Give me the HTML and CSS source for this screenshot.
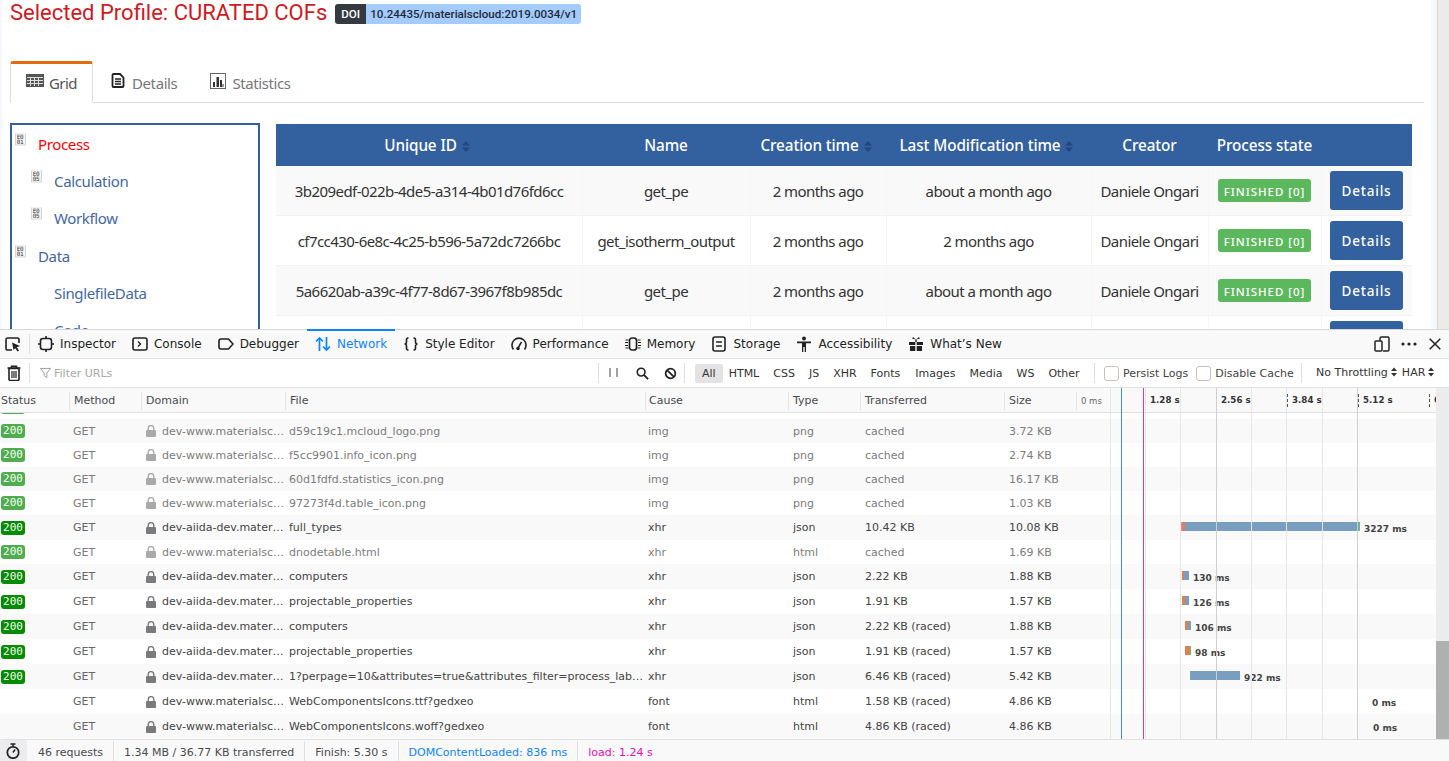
FILE: index.html
```html
<!DOCTYPE html>
<html lang="en">
<head>
<meta charset="utf-8">
<title>Selected Profile: CURATED COFs</title>
<link rel="stylesheet" href="styles.css">
</head>
<body>
<svg class="defs" width="0" height="0" aria-hidden="true">
  <defs>
    <symbol id="chip-a" viewBox="0 0 12 13">
      <rect width="12" height="13" fill="#d4d4d4"/><rect x="1" y="0" width="10" height="12" fill="#f4f4f4"/>
      <text x="2" y="5.500" class="chip-text">E0</text><text x="2" y="11.500" class="chip-text">01</text>
    </symbol>
    <symbol id="chip-b" viewBox="0 0 12 13">
      <rect width="12" height="13" fill="#d4d4d4"/><rect x="1" y="0" width="10" height="12" fill="#f4f4f4"/>
      <text x="2" y="5.500" class="chip-text">E0</text><text x="2" y="11.500" class="chip-text">05</text>
    </symbol>
    <symbol id="sort" viewBox="0 0 8 11"><path d="M0 4.5 4 0l4 4.5zM0 6.500h8L4 11z" fill="#23467e"/></symbol>
    <symbol id="lock" viewBox="0 0 10 12"><path d="M2.200 5V3.400a2.800 2.800 0 0 1 5.600 0V5" fill="none" stroke="currentColor" stroke-width="1.400"/><rect x="0" y="5" width="10" height="7" rx="1" fill="currentColor"/></symbol>
    <symbol id="updown" viewBox="0 0 6 10"><path d="M0 4 3 0.500 6 4zM0 6h6L3 9.500z" fill="#333"/></symbol>
  </defs>
</svg>

<div class="page-frame">
  <main class="page">
    <div class="title-row">
      <h1 class="title">Selected Profile: CURATED COFs</h1>
      <span class="doi"><span class="doi-key">DOI</span><span class="doi-val">10.24435/materialscloud:2019.0034/v1</span></span>
    </div>
    <nav class="page-tabs">
      <a class="page-tab active">
        <svg class="pt-icon grid-icon" viewBox="0 0 18 13"><rect width="18" height="13" fill="#555"/><path d="M1 3.500h16M1 6.500h16M1 9.500h16M4.500 3v9M8.500 3v9M12.500 3v9" stroke="#ddd" stroke-width="1"/></svg>
        Grid
      </a>
      <a class="page-tab">
        <svg class="pt-icon doc-icon" viewBox="0 0 14 16"><path d="M1.500 2.500a1 1 0 0 1 1-1H9l3.500 3.500v8.500a1 1 0 0 1-1 1h-9a1 1 0 0 1-1-1z" fill="#fff" stroke="#222" stroke-width="1.800"/><path d="M4 6.500h6M4 9h6M4 11.500h6" stroke="#222" stroke-width="1.300"/></svg>
        Details
      </a>
      <a class="page-tab">
        <svg class="pt-icon stat-icon" viewBox="0 0 16 16"><rect x="0.500" y="0.500" width="15" height="15" fill="#fff" stroke="#666"/><path d="M3 14V9h2v5zM6.500 14V4h2.500v10zM10 14V7h2v7z" fill="#333"/><path d="M12.500 14v-3h1v3z" fill="#333"/></svg>
        Statistics
      </a>
    </nav>
    <div class="content">
      <aside class="tree">
        <div class="tree-item lvl0 current"><svg class="chip"><use href="#chip-a"/></svg><span>Process</span></div>
        <div class="tree-item lvl1"><svg class="chip"><use href="#chip-b"/></svg><span>Calculation</span></div>
        <div class="tree-item lvl1"><svg class="chip"><use href="#chip-b"/></svg><span>Workflow</span></div>
        <div class="tree-item lvl0 data"><svg class="chip"><use href="#chip-a"/></svg><span>Data</span></div>
        <div class="tree-item lvl2"><span>SinglefileData</span></div>
        <div class="tree-item lvl2"><span>Code</span></div>
      </aside>
      <table class="nodes">
        <colgroup>
          <col class="w-id"><col class="w-name"><col class="w-ctime"><col class="w-mtime"><col class="w-creator"><col class="w-state"><col class="w-action">
        </colgroup>
        <thead>
          <tr>
            <th class="sortable">Unique ID <svg class="sort"><use href="#sort"/></svg></th>
            <th>Name</th>
            <th class="sortable">Creation time <svg class="sort"><use href="#sort"/></svg></th>
            <th class="sortable">Last Modification time <svg class="sort"><use href="#sort"/></svg></th>
            <th>Creator</th>
            <th>Process state</th>
            <th></th>
          </tr>
        </thead>
        <tbody>
          <tr><td>3b209edf-022b-4de5-a314-4b01d76fd6cc</td><td>get_pe</td><td>2 months ago</td><td>about a month ago</td><td>Daniele Ongari</td><td><span class="state">FINISHED [0]</span></td><td><button class="details">Details</button></td></tr>
          <tr><td>cf7cc430-6e8c-4c25-b596-5a72dc7266bc</td><td>get_isotherm_output</td><td>2 months ago</td><td>2 months ago</td><td>Daniele Ongari</td><td><span class="state">FINISHED [0]</span></td><td><button class="details">Details</button></td></tr>
          <tr><td>5a6620ab-a39c-4f77-8d67-3967f8b985dc</td><td>get_pe</td><td>2 months ago</td><td>about a month ago</td><td>Daniele Ongari</td><td><span class="state">FINISHED [0]</span></td><td><button class="details">Details</button></td></tr>
          <tr><td></td><td></td><td></td><td></td><td></td><td></td><td><button class="details">Details</button></td></tr>
        </tbody>
      </table>
    </div>
  </main>
  <div class="page-scroll"></div>
</div>

<section class="devtools">
  <div class="dt-tabs">
    <span class="picker">
      <svg class="ico" viewBox="0 0 16 16"><path d="M7 14H2.500A1.500 1.500 0 0 1 1 12.500v-9A1.500 1.500 0 0 1 2.500 2h10A1.500 1.500 0 0 1 14 3.500V7" fill="none" stroke="#222" stroke-width="1.600"/><path d="M7 6.500l8 3.500-3.200 1.300 2.200 3.200-1.500 1-2.200-3.200L8.500 14z" fill="#222"/></svg>
    </span>
    <a class="dt-tab"><svg class="ico" viewBox="0 0 16 16"><rect x="2.500" y="2.500" width="11" height="11" rx="2.500" fill="none" stroke="#222" stroke-width="1.600"/><path d="M8 0v2.500M8 13.500V16M0 8h2.500M13.500 8H16" stroke="#222" stroke-width="1.600"/></svg>Inspector</a>
    <a class="dt-tab"><svg class="ico" viewBox="0 0 16 16"><rect x="1" y="2" width="14" height="12" rx="2" fill="none" stroke="#222" stroke-width="1.600"/><path d="M6 5.500 8.500 8 6 10.500" fill="none" stroke="#222" stroke-width="1.400"/></svg>Console</a>
    <a class="dt-tab"><svg class="ico" viewBox="0 0 16 16"><path d="M3 3h7.500L15 8l-4.500 5H3a2 2 0 0 1-2-2V5a2 2 0 0 1 2-2z" fill="none" stroke="#222" stroke-width="1.600"/></svg>Debugger</a>
    <a class="dt-tab selected"><svg class="ico" viewBox="0 0 16 16"><path d="M4.500 15V2M1 5.500 4.500 2 8 5.500M11.500 1v13M8 10.500l3.500 3.500 3.500-3.500" fill="none" stroke="#0a84ff" stroke-width="1.700"/></svg>Network</a>
    <a class="dt-tab"><svg class="ico" viewBox="0 0 16 16"><path d="M5.500 2H5C3.500 2 3.500 3 3.500 4v2C3.500 7.200 2.500 8 1.500 8c1 0 2 .8 2 2v2c0 1 0 2 1.500 2h.5M10.500 2h.5c1.500 0 1.500 1 1.500 2v2c0 1.200 1 2 2 2-1 0-2 .8-2 2v2c0 1 0 2-1.500 2h-.5" fill="none" stroke="#222" stroke-width="1.600"/></svg>Style Editor</a>
    <a class="dt-tab"><svg class="ico" viewBox="0 0 16 16"><path d="M2.500 13.500A7 7 0 1 1 13.500 13.500" fill="none" stroke="#222" stroke-width="1.600"/><path d="M7 12 10.500 6" stroke="#222" stroke-width="1.500"/><circle cx="7" cy="12.500" r="1.800" fill="#222"/></svg>Performance</a>
    <a class="dt-tab"><svg class="ico" viewBox="0 0 16 16"><rect x="4.500" y="2" width="7" height="12" rx="2.500" fill="none" stroke="#222" stroke-width="1.700"/><path d="M0.500 4h3M0 6.500h3M0 9.500h3M0.500 12h3M12.500 4h3M13 6.500h3M13 9.500h3M12.500 12h3" stroke="#222" stroke-width="1"/></svg>Memory</a>
    <a class="dt-tab"><svg class="ico" viewBox="0 0 16 16"><rect x="2" y="1" width="12" height="14" rx="2" fill="none" stroke="#222" stroke-width="1.600"/><path d="M5 6h6M5 10h6" stroke="#222" stroke-width="1.500"/></svg>Storage</a>
    <a class="dt-tab"><svg class="ico" viewBox="0 0 16 16"><circle cx="8" cy="2.500" r="2" fill="#222"/><path d="M1 5.500h14v1.800h-5V16H8.700v-5H7.300v5H6V7.300H1z" fill="#222"/></svg>Accessibility</a>
    <a class="dt-tab"><svg class="ico" viewBox="0 0 16 16"><path d="M1 6h6.300V3.500h1.400V6H15v3H8.700V6H7.300v3H1zM2 10h5.300v5H2zM8.700 10H14v5H8.700z" fill="#222"/><path d="M8 3.500 5 1l-.8 1.800zM8 3.500 11 1l.8 1.800z" fill="#222"/></svg>What’s New</a>
    <span class="dt-tab-actions">
      <svg class="ico" viewBox="0 0 16 16"><path d="M6 4.500V2.500A1.500 1.500 0 0 1 7.500 1H14a1.500 1.500 0 0 1 1 1.500v11A1.500 1.500 0 0 1 13.500 15H9" fill="none" stroke="#222" stroke-width="1.500"/><rect x="1" y="5" width="7" height="10" rx="1" fill="none" stroke="#222" stroke-width="1.500"/></svg>
      <svg class="ico" viewBox="0 0 16 16"><circle cx="2" cy="8" r="1.600" fill="#222"/><circle cx="8" cy="8" r="1.600" fill="#222"/><circle cx="14" cy="8" r="1.600" fill="#222"/></svg>
      <svg class="ico ico-x" viewBox="0 0 12 12"><path d="M.7.700l10.600 10.600M11.300.7.700 11.300" stroke="#222" stroke-width="1.500"/></svg>
    </span>
  </div>

  <div class="dt-toolbar">
    <span class="trash"><svg class="ico" viewBox="0 0 16 16"><path d="M1.500 3h13M5.500 3V1.200h5V3" fill="none" stroke="#222" stroke-width="1.500"/><path d="M3 3.500h10V14a1.500 1.500 0 0 1-1.500 1.500h-7A1.500 1.500 0 0 1 3 14z" fill="none" stroke="#222" stroke-width="1.600"/><path d="M6 6v7M8 6v7M10 6v7" stroke="#222" stroke-width="1.200"/></svg></span>
    <span class="filter">
      <svg class="filter-ico" viewBox="0 0 12 12"><path d="M.5 1h11L7.500 6v5l-3-2V6z" fill="#fff" stroke="#999"/></svg>
      <span class="filter-ph">Filter URLs</span>
    </span>
    <span class="ctl-icons">
      <svg class="ctl pause" viewBox="0 0 10 12"><path d="M1 1v9M8 1v9" stroke="#444" stroke-width="1"/></svg>
      <svg class="ctl" viewBox="0 0 14 14"><circle cx="5.500" cy="5.500" r="4.200" fill="none" stroke="#222" stroke-width="1.700"/><path d="M8.500 8.500 13 13" stroke="#222" stroke-width="2"/></svg>
      <svg class="ctl" viewBox="0 0 14 14"><circle cx="7" cy="7" r="5.200" fill="none" stroke="#222" stroke-width="1.900"/><path d="M3.300 3.300l7.400 7.400" stroke="#222" stroke-width="1.900"/></svg>
    </span>
    <span class="types">
      <span class="type on">All</span><span class="type">HTML</span><span class="type">CSS</span><span class="type">JS</span><span class="type">XHR</span><span class="type type-fonts">Fonts</span><span class="type">Images</span><span class="type">Media</span><span class="type">WS</span><span class="type">Other</span>
    </span>
    <span class="checks">
      <label class="check"><span class="box"></span>Persist Logs</label>
      <label class="check"><span class="box"></span>Disable Cache</label>
    </span>
    <span class="selects">
      <span class="sel">No Throttling<svg class="updown"><use href="#updown"/></svg></span>
      <span class="sel">HAR<svg class="updown"><use href="#updown"/></svg></span>
    </span>
  </div>

  <div class="net">
    <div class="net-table">
      <div class="net-head">
        <div class="h h-status">Status</div>
        <div class="h">Method</div>
        <div class="h">Domain</div>
        <div class="h">File</div>
        <div class="h h-cause">Cause</div>
        <div class="h">Type</div>
        <div class="h">Transferred</div>
        <div class="h">Size</div>
        <div class="wf-head">
          <span class="zero">0 ms</span>
          <span class="tick">1.28 s</span><span class="tick">2.56 s</span><span class="tick">3.84 s</span><span class="tick">5.12 s</span><span class="tick">6.40 s</span>
        </div>
      </div>
      <div class="net-rows">
        <div class="r off"><span class="c-status"><b class="code cached">200</b></span></div>
        <div class="r stripe muted"><span class="c-status"><b class="code cached">200</b></span><span class="c-m">GET</span><span class="c-d"><svg class="lock"><use href="#lock"/></svg>dev-www.materialsc…</span><span class="c-f">d59c19c1.mcloud_logo.png</span><span class="c-c">img</span><span class="c-t">png</span><span class="c-t">cached</span><span class="c-t">3.72 KB</span></div>
        <div class="r muted"><span class="c-status"><b class="code cached">200</b></span><span class="c-m">GET</span><span class="c-d"><svg class="lock"><use href="#lock"/></svg>dev-www.materialsc…</span><span class="c-f">f5cc9901.info_icon.png</span><span class="c-c">img</span><span class="c-t">png</span><span class="c-t">cached</span><span class="c-t">2.74 KB</span></div>
        <div class="r stripe muted"><span class="c-status"><b class="code cached">200</b></span><span class="c-m">GET</span><span class="c-d"><svg class="lock"><use href="#lock"/></svg>dev-www.materialsc…</span><span class="c-f">60d1fdfd.statistics_icon.png</span><span class="c-c">img</span><span class="c-t">png</span><span class="c-t">cached</span><span class="c-t">16.17 KB</span></div>
        <div class="r muted"><span class="c-status"><b class="code cached">200</b></span><span class="c-m">GET</span><span class="c-d"><svg class="lock"><use href="#lock"/></svg>dev-www.materialsc…</span><span class="c-f">97273f4d.table_icon.png</span><span class="c-c">img</span><span class="c-t">png</span><span class="c-t">cached</span><span class="c-t">1.03 KB</span></div>
        <div class="r tall stripe"><span class="c-status"><b class="code">200</b></span><span class="c-m">GET</span><span class="c-d"><svg class="lock"><use href="#lock"/></svg>dev-aiida-dev.mater…</span><span class="c-f">full_types</span><span class="c-c">xhr</span><span class="c-t">json</span><span class="c-t">10.42 KB</span><span class="c-t">10.08 KB</span>
          <span class="wf"><span class="bar" style="margin-left:104px"><i class="s-pink" style="width:1px"></i><i class="s-orange" style="width:3px"></i><i class="s-blue" style="width:174px"></i><i class="s-green" style="width:1px"></i></span><em class="ms">3227 ms</em></span></div>
        <div class="r muted"><span class="c-status"><b class="code cached">200</b></span><span class="c-m">GET</span><span class="c-d"><svg class="lock"><use href="#lock"/></svg>dev-www.materialsc…</span><span class="c-f">dnodetable.html</span><span class="c-c">xhr</span><span class="c-t">html</span><span class="c-t">cached</span><span class="c-t">1.69 KB</span></div>
        <div class="r tall stripe"><span class="c-status"><b class="code">200</b></span><span class="c-m">GET</span><span class="c-d"><svg class="lock"><use href="#lock"/></svg>dev-aiida-dev.mater…</span><span class="c-f">computers</span><span class="c-c">xhr</span><span class="c-t">json</span><span class="c-t">2.22 KB</span><span class="c-t">1.88 KB</span>
          <span class="wf"><span class="bar" style="margin-left:105px"><i class="s-orange" style="width:2px"></i><i class="s-blue" style="width:5px"></i></span><em class="ms">130 ms</em></span></div>
        <div class="r tall"><span class="c-status"><b class="code">200</b></span><span class="c-m">GET</span><span class="c-d"><svg class="lock"><use href="#lock"/></svg>dev-aiida-dev.mater…</span><span class="c-f">projectable_properties</span><span class="c-c">xhr</span><span class="c-t">json</span><span class="c-t">1.91 KB</span><span class="c-t">1.57 KB</span>
          <span class="wf"><span class="bar" style="margin-left:105px"><i class="s-orange" style="width:3px"></i><i class="s-blue" style="width:4px"></i></span><em class="ms">126 ms</em></span></div>
        <div class="r tall stripe"><span class="c-status"><b class="code">200</b></span><span class="c-m">GET</span><span class="c-d"><svg class="lock"><use href="#lock"/></svg>dev-aiida-dev.mater…</span><span class="c-f">computers</span><span class="c-c">xhr</span><span class="c-t">json</span><span class="c-t">2.22 KB (raced)</span><span class="c-t">1.88 KB</span>
          <span class="wf"><span class="bar" style="margin-left:108px"><i class="s-orange" style="width:3px"></i><i class="s-blue" style="width:3px"></i></span><em class="ms">106 ms</em></span></div>
        <div class="r tall"><span class="c-status"><b class="code">200</b></span><span class="c-m">GET</span><span class="c-d"><svg class="lock"><use href="#lock"/></svg>dev-aiida-dev.mater…</span><span class="c-f">projectable_properties</span><span class="c-c">xhr</span><span class="c-t">json</span><span class="c-t">1.91 KB (raced)</span><span class="c-t">1.57 KB</span>
          <span class="wf"><span class="bar" style="margin-left:108px"><i class="s-orange" style="width:5px"></i><i class="s-green" style="width:1px"></i></span><em class="ms">98 ms</em></span></div>
        <div class="r tall stripe"><span class="c-status"><b class="code">200</b></span><span class="c-m">GET</span><span class="c-d"><svg class="lock"><use href="#lock"/></svg>dev-aiida-dev.mater…</span><span class="c-f">1?perpage=10&amp;attributes=true&amp;attributes_filter=process_lab…</span><span class="c-c">xhr</span><span class="c-t">json</span><span class="c-t">6.46 KB (raced)</span><span class="c-t">5.42 KB</span>
          <span class="wf"><span class="bar" style="margin-left:113px"><i class="s-blue" style="width:50px"></i></span><em class="ms">922 ms</em></span></div>
        <div class="r tall"><span class="c-status"></span><span class="c-m">GET</span><span class="c-d"><svg class="lock"><use href="#lock"/></svg>dev-www.materialsc…</span><span class="c-f">WebComponentsIcons.ttf?gedxeo</span><span class="c-c">font</span><span class="c-t">html</span><span class="c-t">1.58 KB (raced)</span><span class="c-t">4.86 KB</span>
          <span class="wf"><span class="bar" style="margin-left:291px"></span><em class="ms">0 ms</em></span></div>
        <div class="r tall stripe"><span class="c-status"></span><span class="c-m">GET</span><span class="c-d"><svg class="lock"><use href="#lock"/></svg>dev-www.materialsc…</span><span class="c-f">WebComponentsIcons.woff?gedxeo</span><span class="c-c">font</span><span class="c-t">html</span><span class="c-t">4.86 KB (raced)</span><span class="c-t">4.86 KB</span>
          <span class="wf"><span class="bar" style="margin-left:292px"></span><em class="ms">0 ms</em></span></div>
      </div>
      <svg class="wf-lines" viewBox="0 0 359 351" aria-hidden="true">
        <path d="M33.500 0v351M68.500 0v351M103.500 0v351M174.500 0v351M209.500 0v351M245.500 0v351" stroke="#e6e6e7"/>
        <path d="M139.500 0v351M280.500 0v351" stroke="#cfcfd1"/>
        <path d="M44.500 0v351" stroke="#3d8fd8"/>
        <path d="M66.500 0v351" stroke="#cc3fb4"/>
      </svg>
    </div>
    <div class="net-scroll"><div class="net-thumb"></div></div>
  </div>

  <div class="dt-status">
    <span class="watch"><svg class="ico" viewBox="0 0 16 16"><circle cx="8" cy="9.500" r="5.700" fill="none" stroke="#222" stroke-width="1.700"/><path d="M5.500 1h5M8 1v3M8 9.500 10 6.500" stroke="#222" stroke-width="1.500"/></svg></span>
    <span class="st">46 requests</span>
    <span class="st">1.34 MB / 36.77 KB transferred</span>
    <span class="st">Finish: 5.30 s</span>
    <span class="st st-dom">DOMContentLoaded: 836 ms</span>
    <span class="st st-load">load: 1.24 s</span>
  </div>
</section>
</body>
</html>
```
FILE: styles.css
```css
* { box-sizing: border-box; }
html, body { margin: 0; padding: 0; height: 761px; overflow: hidden; background: #fff; }
body { display: flex; flex-direction: column; }
.defs { position: absolute; }
.chip-text { font: 6.500px "DejaVu Sans Mono", monospace; fill: #333; }

/* ---------- page ---------- */
.page-frame { height: 329px; display: flex; overflow: hidden; background: #f5f9fd; padding-left: 2px; font-family: "Noto Sans", sans-serif; }
.page { width: 1429px; height: 329px; background: #fff; padding: 0 7px 0 8px; overflow: hidden; margin-right: 6px; }
.page-scroll { width: 12px; background: #ecebea; border-left: 1px solid #d8d4d4; }

.title-row { display: flex; align-items: center; height: 25px; }
.title { margin: 0; font: 400 22px/25px Roboto, sans-serif; color: #cf1b1f; white-space: nowrap; }
.doi { display: flex; margin: 2px 0 0 8px; font: 500 11.600px/20px Roboto, sans-serif; height: 20px; }
.doi-key { background: #343a40; color: #fff; padding: 0 6px; border-radius: 3px 0 0 3px; width: 31px; }
.doi-val { background: #a3cbfc; color: #1f2a38; padding: 0 4px; border-radius: 0 3px 3px 0; }

.page-tabs { display: flex; margin-top: 36px; height: 42px; border-bottom: 1px solid #ddd; }
.page-tab { display: flex; align-items: center; height: 42px; padding: 2px 16px 0; color: #777; font-size: 15px; letter-spacing: -.4px; gap: 7px; }
.page-tab.active { width: 83px; color: #555; background: #fff; border: 1px solid #ddd; border-top: 3px solid #e36c0a; border-bottom-color: #fff; border-radius: 3px 3px 0 0; padding: 0 0 0 15px; gap: 5px; margin-right: 2px; letter-spacing: -.6px; }
.pt-icon { display: block; margin-top: -5px; }
.grid-icon { width: 18px; height: 13px; }
.doc-icon { width: 14px; height: 17px; }
.stat-icon { width: 16px; height: 16px; margin: -5px -1px 0 1px; }

.content { display: flex; align-items: flex-start; margin-top: 20px; gap: 16px; }
.tree { width: 250px; height: 240px; flex: none; border: 2px solid #33609f; padding-top: 0; font-size: 15px; letter-spacing: -.35px; color: #3f67a8; }
.tree-item { display: flex; height: 37.200px; align-items: center; }
.tree-item.lvl0 { padding-left: 3px; }
.tree-item.lvl1 { padding-left: 19px; }
.tree-item.lvl2 { padding-left: 42px; }
.tree-item.current { color: #f00; }
.tree-item.data { height: 38px; }
.chip { width: 11px; height: 13px; flex: none; margin-right: 12px; margin-top: -8px; }

.nodes { width: 1136px; margin-top: 1px; table-layout: fixed; border-collapse: separate; border-spacing: 0; font-size: 15px; letter-spacing: -.55px; color: #333; }
.w-id { width: 306px; } .w-name { width: 168px; } .w-ctime { width: 136px; } .w-mtime { width: 205px; }
.w-creator { width: 117px; } .w-state { width: 113px; } .w-action { width: 91px; }
.nodes th { height: 42px; background: #33609f; color: #fff; font-weight: 500; font-size: 15.300px; padding: 0 0 1px; letter-spacing: -.1px; }
.nodes th.sortable { padding-right: 4px; }
.nodes td { height: 50px; padding: 0 1px 0 0; text-align: center; border-bottom: 1px solid #f2f2f2; border-left: 1px solid #f6f6f6; white-space: nowrap; }
.nodes td:first-child { border-left: 0; padding-right: 0; }
.nodes tbody tr:nth-child(odd) td { background: #f9f9f9; }
.sort { width: 8px; height: 11px; vertical-align: -1px; margin-left: 1px; }
.state { display: inline-block; width: 93px; height: 23px; background: #5cb85c; color: #fff; border-radius: 3px; font-size: 11.500px; font-weight: 500; line-height: 26px; letter-spacing: .95px; }
.details { display: block; margin: 0 auto; width: 73px; height: 39px; background: #33609f; color: #fff; border: 0; border-radius: 3px; font: 500 13.500px "Noto Sans", sans-serif; letter-spacing: .8px; padding: 0; }

/* ---------- devtools ---------- */
.devtools { height: 432px; display: flex; flex-direction: column; font: 11px "DejaVu Sans", sans-serif; color: #333; border-top: 1px solid #d7d7db; background: #fff; }
.ico { width: 16px; height: 16px; display: block; flex: none; }

.dt-tabs { height: 29px; display: flex; background: #f9f9fa; border-bottom: 1px solid #e0e0e2; font-size: 12px; color: #222; }
.picker { width: 30px; padding-left: 5px; display: flex; align-items: center; }
.picker::after { content: ""; height: 20px; border-left: 1px solid #e0e0e2; margin-left: 8px; }
.dt-tab { display: flex; align-items: center; gap: 6px; padding: 0 8px; white-space: nowrap; }
.dt-tab.selected { color: #0a84ff; box-shadow: inset 0 2px 0 #0a84ff; margin-top: -1px; padding-top: 1px; }
.dt-tab-actions { margin-left: auto; display: flex; align-items: center; gap: 11px; padding-right: 8px; }
.ico-x { width: 12px; height: 12px; margin-left: 1px; }

.dt-toolbar { height: 29px; display: flex; align-items: center; border-bottom: 1px solid #e0e0e2; background: #fff; }
.trash { width: 30px; height: 20px; padding-left: 6px; border-right: 1px solid #e0e0e2; display: flex; align-items: center; }
.filter { display: flex; align-items: center; width: 568px; padding-left: 10px; gap: 3px; }
.filter-ico { width: 11px; height: 12px; }
.filter-ph { color: #a8a8a8; }
.ctl-icons { display: flex; align-items: center; height: 20px; width: 87px; border-left: 1px solid #e0e0e2; border-right: 1px solid #e0e0e2; padding-left: 10px; gap: 15px; flex: none; }
.ctl { width: 13px; height: 13px; display: block; }
.pause { width: 10px; height: 12px; margin-right: 2px; }
.types { display: flex; width: 409px; padding-left: 10px; flex: none; align-items: center; }
.type { padding: 3px 7px; border-radius: 2px; white-space: nowrap; }
.type.on { background: #e3e3e5; margin-right: -1px; }
.type-fonts { padding-right: 8px; }
.checks { display: flex; align-items: center; gap: 8px; height: 20px; width: 208px; flex: none; border-left: 1px solid #e0e0e2; border-right: 1px solid #e0e0e2; padding-left: 9px; }
.check { display: flex; align-items: center; gap: 4px; white-space: nowrap; color: #444; }
.box { width: 15px; height: 15px; border: 1px solid #c9c0bc; border-radius: 3px; background: #fff; }
.selects { display: flex; padding-left: 14px; gap: 5px; white-space: nowrap; margin-top: -2px; }
.sel { display: flex; align-items: center; }
.updown { width: 6px; height: 10px; margin-left: 3px; }

.net { flex: 1; min-height: 0; display: flex; }
.net-table { width: 1436px; position: relative; display: flex; flex-direction: column; overflow: hidden; }
.net-head, .r { display: grid; }
.net-head { grid-template-columns: 69px 72px 144px 360px 143px 72px 144px 72px 360px; height: 25px; flex: none; padding-top: 1px; background: #f9f9fa; border-bottom: 1px solid #e0e0e2; align-items: center; color: #4a4a4f; }
.h { height: 18px; line-height: 18px; padding-left: 4px; border-left: 1px solid #e3e3e5; }
.h-status { border-left: 0; padding-left: 1px; }
.h-cause { padding-left: 3px; }
.wf-head { display: flex; height: 18px; align-items: center; overflow: hidden; border-left: 1px solid #e3e3e5; white-space: nowrap; }
.zero { width: 68px; flex: none; padding-left: 4px; font-size: 8.500px; color: #666; }
.tick { width: 71px; flex: none; border-left: 1px dashed #555; height: 13px; line-height: 13px; padding-left: 4px; font-size: 8.700px; font-weight: bold; color: #333; }

.net-rows { flex: 1; min-height: 0; overflow: hidden; }
.r { grid-template-columns: 70px 72px 144px 360px 143px 72px 144px 72px 359px; height: 24px; align-items: center; color: #444; white-space: nowrap; }
.r.tall { height: 25px; }
.r.off { margin-top: -18px; }
.r.stripe { background: #f9f9fa; }
.r.muted { color: #7c7c7c; }
.c-status { padding-left: 1px; height: 14px; display: block; }
.code { display: block; width: 24px; height: 14px; border-radius: 3px; background: #058b00; color: #f4fff4; font: 11px/14px "DejaVu Sans Mono", monospace; text-align: center; }
.code.cached { background: #4fac4f; }
.c-m { padding-left: 3px; color: #666; }
.muted .c-m { color: #7c7c7c; }
.c-d { padding-left: 4px; display: flex; align-items: center; overflow: hidden; }
.lock { width: 10px; height: 12px; color: #7a7a7c; margin-right: 6px; flex: none; }
.muted .lock { color: #a9a9a9; }
.c-f { padding-left: 3px; overflow: hidden; }
.c-c { padding-left: 2px; }
.c-t { padding-left: 4px; }
.wf { display: flex; align-items: center; position: relative; }
.bar { display: flex; height: 9px; margin-top: -2px; }
.bar i { display: block; height: 9px; flex: none; }
.s-pink { background: #d58bd0; }
.s-orange { background: #e08050; }
.s-blue { background: #7a9ebf; }
.s-green { background: #5ecb5e; }
.ms { font: bold 9px "DejaVu Sans", sans-serif; color: #444; margin: 2px 0 0 4px; }
.wf-lines { position: absolute; left: 1077px; top: 0; width: 359px; height: 351px; pointer-events: none; }

.net-scroll { width: 13px; background: #ececee; display: flex; flex-direction: column; justify-content: flex-end; }
.net-thumb { height: 98px; background: #b0b0b1; }

.dt-status { height: 22px; flex: none; display: flex; align-items: center; background: #f9f9fa; border-top: 1px solid #e0e0e2; color: #4a4a4f; }
.watch { width: 27px; height: 21px; background: #ececee; display: flex; align-items: center; justify-content: center; border-radius: 2px; padding-right: 2px; }
.st { padding: 3px 10px 0; border-right: 1px solid #e0e0e2; height: 20px; line-height: 18px; white-space: nowrap; }
.watch + .st { padding-left: 11px; }
.st-dom { color: #0a84ff; }
.st-load { color: #e40fb4; border-right: 0; }
```
